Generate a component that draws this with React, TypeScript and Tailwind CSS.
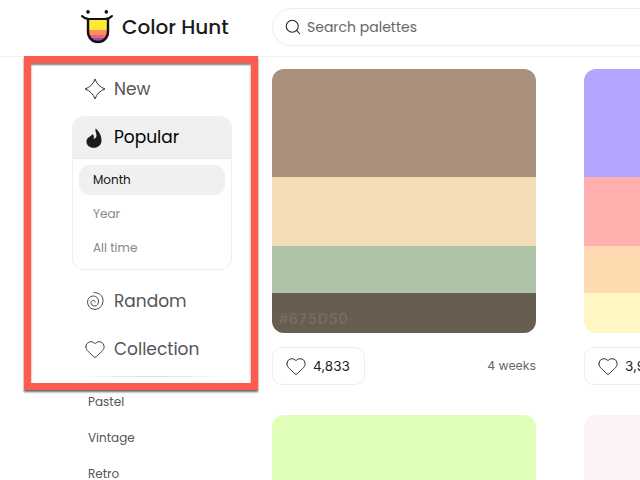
import { Heart, Search } from "lucide-react";

const sans = "font-['Poppins','Lato','Noto_Sans',sans-serif]";

function Logo() {
  return (
    <svg width="32" height="34" viewBox="0 0 32 34" className="shrink-0">
      <circle cx="7" cy="1.900" r="1.800" fill="#111" />
      <circle cx="25.300" cy="1.900" r="1.800" fill="#111" />
      <clipPath id="tongue">
        <path d="M7 8V22a10 10 0 0 0 20 0V8z" />
      </clipPath>
      <g clipPath="url(#tongue)">
        <rect x="5" y="8" width="24" height="12" fill="#fee934" />
        <rect x="5" y="20" width="24" height="5" fill="#ff8f5a" />
        <rect x="5" y="25" width="24" height="3" fill="#ef5d8d" />
        <rect x="5" y="28" width="24" height="5" fill="#8e51a8" />
      </g>
      <path d="M7 8V22a10 10 0 0 0 20 0V8" fill="none" stroke="#111" strokeWidth="2.400" />
      <path d="M1 6Q4 9 8 9H24Q28 9 31 6" fill="none" stroke="#111" strokeWidth="2" strokeLinecap="round" />
    </svg>
  );
}

function Sparkle() {
  return (
    <svg width="22" height="22" viewBox="0 0 22 22" fill="none" stroke="#333" strokeWidth="1" strokeLinejoin="round">
      <path d="M11 1C12.700 6 16 9.300 21 11C16 12.700 12.700 16 11 21C9.300 16 6 12.700 1 11C6 9.300 9.300 6 11 1z" />
    </svg>
  );
}

function Flame() {
  return (
    <svg width="16" height="20" viewBox="0 0 16 20">
      <path d="M9.500 0.500c-.5 3 1 4.500 1 7 0 2-1.500 3.500-3 3.200 1-2 .3-3.500-1-4.700C5.800 8.500 0.500 9 0.500 13.500 0.500 17.500 3.800 19.800 8 19.800s7.500-3 7.500-7.300c0-5.500-3-10-6-12z" fill="#1c1c1c" />
    </svg>
  );
}

function Spiral() {
  return (
    <svg width="18" height="20" viewBox="0 0 18 20" fill="none" stroke="#444" strokeWidth="1" strokeLinecap="round">
      <path d="M7 1.500C12 1.500 16 4.500 16 9.500C16 14.500 12.500 18.300 8 18.300C3.500 18.300 .6 15 .6 11C.6 7.500 3 5 6.500 5C9.500 5 11.500 7.500 11.500 10C11.500 13 10 15 8 15C5.500 15 4 13.500 4 11.500C4 10 5 9.300 6.500 9.300C7.500 9.300 8.200 10 8 11" />
    </svg>
  );
}

function NavRow({ label, icon }: { label: string; icon: React.ReactNode }) {
  return (
    <div className="flex items-center h-[48px] pl-[12px]">
      <div className="w-[30px] flex justify-start">{icon}</div>
      <span className="pt-[2px] text-[17px] text-[#555]">{label}</span>
    </div>
  );
}

function Card({ colors, hex, likes, time }: { colors: string[]; hex?: string; likes: string; time: string }) {
  const heights = [108, 69, 47, 40];
  return (
    <div className="w-[264px] shrink-0">
      <div className="relative rounded-[12px] overflow-hidden">
        {colors.map((c, i) => (
          <div key={c} style={{ backgroundColor: c, height: heights[i] }} />
        ))}
        {hex && (
          <span className="absolute left-[7px] bottom-[4px] font-['Inter',sans-serif] text-[14px] font-semibold tracking-[1px] text-white/10">
            {hex}
          </span>
        )}
      </div>
      <div className="flex items-center justify-between mt-[14px]">
        <div className="flex items-center h-[38px] pl-[12px] pr-[14px] border border-[#eeeeee] rounded-[10px]">
          <Heart size={22} strokeWidth={1} className="text-[#222]" />
          <span className="ml-[6px] font-['Inter',sans-serif] text-[13.500px] text-[#222]">{likes}</span>
        </div>
        <span className="font-['Inter',sans-serif] text-[12.300px] text-[#666]">{time}</span>
      </div>
    </div>
  );
}

export default function App() {
  return (
    <div className={`relative w-[640px] h-[480px] overflow-hidden bg-white ${sans}`}>
      <header className="flex items-start pt-[8px] h-[57px] border-b border-[#f0f0f0]">
        <div className="flex items-center w-[272px] shrink-0 h-[38px] pl-[81px]">
          <Logo />
          <span className="ml-[9px] text-[20px] font-medium text-[#1a1a1a] whitespace-nowrap">Color Hunt</span>
        </div>
        <div className="flex items-center w-[500px] shrink-0 h-[38px] pl-[11px] border border-[#eeeeee] rounded-full">
          <Search size={18} strokeWidth={1.4} className="text-[#222]" />
          <span className="ml-[5px] text-[14px] text-[#666]">Search palettes</span>
        </div>
      </header>

      <div className="flex">
        <aside className="w-[272px] shrink-0 pl-[72px] pr-[40px] pt-[8px]">
          <NavRow label="New" icon={<Sparkle />} />
          <div className="mt-[3px] border border-[#eeeeee] rounded-[12px] overflow-hidden">
            <div className="flex items-center h-[42px] pl-[13px] bg-[#f0f0f0] border-b border-[#e8e8e8]">
              <div className="w-[28px]"><Flame /></div>
              <span className="text-[17px] text-black">Popular</span>
            </div>
            <div className="px-[6px] pt-[6px] pb-[4px] text-[12px] flex flex-col">
              <div className="h-[30px] flex items-center pl-[14px] rounded-[10px] bg-[#f0f0f0] text-[#111]">Month</div>
              <div className="h-[34px] mt-[2px] flex items-center pl-[14px] text-[#888]">Year</div>
              <div className="h-[34px] flex items-center pl-[14px] text-[#888]">All time</div>
            </div>
          </div>
          <div className="mt-[7px]">
            <NavRow label="Random" icon={<div className="pl-[3px]"><Spiral /></div>} />
            <NavRow label="Collection" icon={<Heart size={22} strokeWidth={1} className="text-[#333]" />} />
          </div>
          <div className="h-px mt-[3px] bg-gradient-to-r from-white via-[#dddddd] to-white" />
          <div className="flex flex-col gap-[16px] pt-[15px] pl-[16px] text-[12px] leading-[20px] text-[#555]">
            <span>Pastel</span>
            <span>Vintage</span>
            <span>Retro</span>
          </div>
        </aside>

        <main className="pt-[12px] grid grid-cols-[264px_264px] gap-x-[48px] gap-y-[30px]">
          <Card colors={["#A8907C", "#F3DEB7", "#ADC4A9", "#675D50"]} hex="#675D50" likes="4,833" time="4 weeks" />
          <Card colors={["#B4A5FF", "#FFB0AE", "#FFDAB0", "#FEF7C3"]} likes="3,921" time="1 month" />
          <Card colors={["#DFFFB9", "#A79277", "#F3DEB7", "#ADC4A9"]} likes="2,140" time="1 month" />
          <Card colors={["#FDF3F4", "#A79277", "#F3DEB7", "#ADC4A9"]} likes="2,080" time="1 month" />
        </main>
      </div>

      <div className="absolute left-[24px] top-[56px] w-[234px] h-[334px] border-[7px] border-[#ff5a4e] shadow-[0_2px_2px_rgba(0,0,0,0.6),inset_0_2px_2px_rgba(0,0,0,0.5)]" />
    </div>
  );
}
